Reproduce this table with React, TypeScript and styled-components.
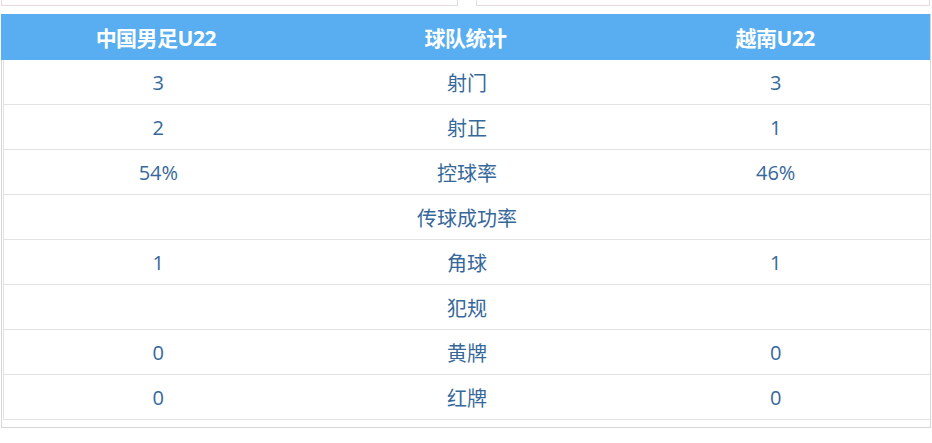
import styled, {createGlobalStyle} from 'styled-components';

const GlobalStyle = createGlobalStyle`
  body {
    margin: 0;
    background: white;
    font-family: "Open Sans", "Noto Sans CJK SC", sans-serif;
  }
`;

const TopStrip = styled.div`
  display: flex;
  justify-content: space-between;
  height: 6px;
  padding: 0 2px 0 1px;
`;

const TopBox = styled.div<{ $width: number }>`
  width: ${p => p.$width}px;
  box-sizing: border-box;
  border: 1px solid #e6dada;
  border-top: none;
`;

const Panel = styled.div`
  margin: 8px 1px 0 1px;
  border: 1px solid #d6d6d6;
  border-top: none;
  padding-bottom: 7px;
`;

const Header = styled.div`
  display: grid;
  grid-template-columns: 1fr 1fr 1fr;
  height: 46px;
  align-items: center;
  background: #58aef0;
  color: white;
  font-size: 21px;
  font-weight: bold;
  text-align: center;
  margin-left: -1px;
  > span {
    letter-spacing: -0.5px;
  }
`;

const Row = styled.div`
  display: grid;
  grid-template-columns: 1fr 1fr 1fr;
  height: 44px;
  align-items: center;
  text-align: center;
  border-bottom: 1px solid #e2e2e2;
  border-left: 1px solid #e2e2e2;
  margin-left: 1px;
  font-size: 20px;
  color: #36689a;
`;

const stats = [
  {home: '3', name: '射门', away: '3'},
  {home: '2', name: '射正', away: '1'},
  {home: '54%', name: '控球率', away: '46%'},
  {home: '', name: '传球成功率', away: ''},
  {home: '1', name: '角球', away: '1'},
  {home: '', name: '犯规', away: ''},
  {home: '0', name: '黄牌', away: '0'},
  {home: '0', name: '红牌', away: '0'},
];

export default function App() {
  return (
    <>
      <GlobalStyle/>
      <TopStrip>
        <TopBox $width={457}/>
        <TopBox $width={454}/>
      </TopStrip>
      <Panel>
        <Header>
          <span>中国男足U22</span>
          <span>球队统计</span>
          <span>越南U22</span>
        </Header>
        {stats.map((s, index) => (
          <Row key={index}>
            <div>{s.home}</div>
            <div>{s.name}</div>
            <div>{s.away}</div>
          </Row>
        ))}
      </Panel>
    </>
  );
}
